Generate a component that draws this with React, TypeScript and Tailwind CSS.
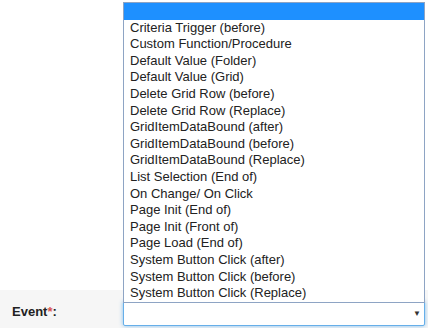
const options = [
  "",
  "Criteria Trigger (before)",
  "Custom Function/Procedure",
  "Default Value (Folder)",
  "Default Value (Grid)",
  "Delete Grid Row (before)",
  "Delete Grid Row (Replace)",
  "GridItemDataBound (after)",
  "GridItemDataBound (before)",
  "GridItemDataBound (Replace)",
  "List Selection (End of)",
  "On Change/ On Click",
  "Page Init (End of)",
  "Page Init (Front of)",
  "Page Load (End of)",
  "System Button Click (after)",
  "System Button Click (before)",
  "System Button Click (Replace)",
];

export default function App() {
  return (
    <div className="relative w-[428px] h-[328px] overflow-hidden bg-white font-['Liberation_Sans',Arial,sans-serif] text-[13px] text-[#333]">
      <div className="h-[290px]" />

      {/* Form row */}
      <div className="flex h-[38px] bg-[#f6f6f6] pt-[11px]">
        <label className="w-[123px] pl-3 pt-[1px] font-bold text-[13px] text-[#222]">
          Event<span className="text-[#d9534f]">*</span>:
        </label>
        <div className="relative w-[302px] h-[25px] rounded-[2px] border border-[#66afe9] bg-white shadow-[0_0_4px_rgba(102,175,233,0.8)]">
          <span className="absolute right-[3px] top-[8px] text-[8px] leading-none text-[#333]">▼</span>
        </div>
      </div>

      {/* Open dropdown list */}
      <ul className="absolute left-[123px] top-[2px] w-[302px] border border-[#8ea4c4] bg-white">
        {options.map((opt, i) => (
          <li
            key={i}
            className={[
              "h-[16.6px] pl-[6px] leading-[16.6px] whitespace-nowrap",
              i === 0 ? "bg-[#1e90ff] text-white" : "text-[#222]",
            ].join(" ")}
          >
            {opt}
          </li>
        ))}
      </ul>
    </div>
  );
}
